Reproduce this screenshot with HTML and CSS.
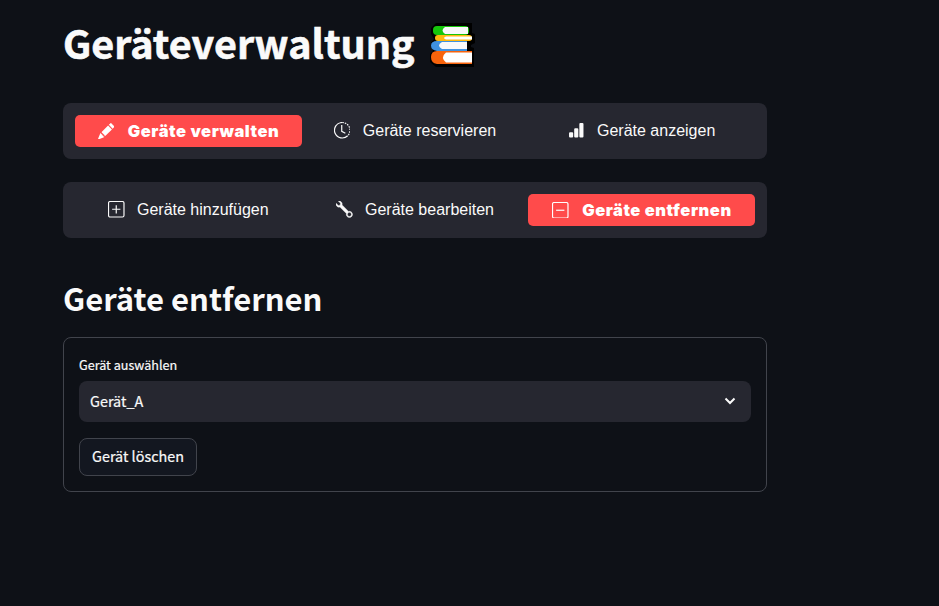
FILE: index.html
```html
<!DOCTYPE html>
<html lang="de">
<head>
<meta charset="utf-8">
<title>Geräteverwaltung</title>
<link rel="stylesheet" href="styles.css">
</head>
<body>
<main>
  <h1><span class="title-text">Geräteverwaltung</span>
    <svg class="books" viewBox="0 0 46 44">
      <path d="M7 0H43V10L46 11V20L42 22V24L45 25V44H7L1 39V31L4 28L2 24V20L5 16L2 11V5Z" fill="#000"/>
      <rect x="4" y="3" width="36" height="9" rx="4" fill="#16c60c"/>
      <path d="M16 4H39V11H16Q11 7.500 16 4" fill="#f8f8fa"/>
      <rect x="6" y="12" width="37" height="6" rx="3" fill="#ffb90f"/>
      <path d="M17 13.500H43V16.500H17Q13 15 17 13.500" fill="#fff"/>
      <path d="M38 18H8Q2 18 2 22.500T8 28H38" fill="#3f91e0"/>
      <path d="M13 19H38V26H13Q7 22.500 13 19" fill="#f8f8fa"/>
      <path d="M43 28H8Q2 28 2 34T8 41H43" fill="#f7630c"/>
      <path d="M17 29.500H43V39.500H17Q11 34.500 17 29.500" fill="#fff"/>
    </svg>
  </h1>
  <nav>
    <a class="active">
      <svg viewBox="0 0 16 16"><path d="M12.854.146a.5.5 0 0 0-.707 0L10.500 1.793 14.207 5.500l1.647-1.646a.5.5 0 0 0 0-.708zm.646 6.061L9.793 2.500 3.293 9H3.500a.5.5 0 0 1 .5.5v.5h.5a.5.5 0 0 1 .5.5v.5h.5a.5.5 0 0 1 .5.5v.5h.5a.5.5 0 0 1 .5.5v.207zm-7.468 7.468A.5.5 0 0 1 6 13.500V13h-.5a.5.5 0 0 1-.5-.5V12h-.5a.5.5 0 0 1-.5-.5V11h-.5a.5.5 0 0 1-.5-.5V10h-.5a.5.5 0 0 1-.175-.032l-.179.178-2 5a.5.5 0 0 0 .65.65l5-2z"/></svg>
      <span>Geräte verwalten</span></a>
    <a>
      <svg viewBox="0 0 16 16" class="line"><path d="M8 .5a7.500 7.500 0 1 0 5.300 12.800"/><path d="M8 .5a7.500 7.500 0 0 1 5.300 12.800" stroke-dasharray="1.500 1"/><path d="M7.500 3v6l3.500 2"/></svg>
      <span>Geräte reservieren</span></a>
    <a>
      <svg viewBox="0 0 16 16"><path d="M1 11a1 1 0 0 1 1-1h2a1 1 0 0 1 1 1v3a1 1 0 0 1-1 1H2a1 1 0 0 1-1-1zm5-4a1 1 0 0 1 1-1h2a1 1 0 0 1 1 1v7a1 1 0 0 1-1 1H7a1 1 0 0 1-1-1zm5-5a1 1 0 0 1 1-1h2a1 1 0 0 1 1 1v12a1 1 0 0 1-1 1h-2a1 1 0 0 1-1-1z"/></svg>
      <span>Geräte anzeigen</span></a>
  </nav>
  <nav>
    <a>
      <svg viewBox="0 0 16 16" class="line"><rect x=".5" y=".5" width="15" height="15" rx="1.500"/><path d="M8 4v8M4 8h8"/></svg>
      <span>Geräte hinzufügen</span></a>
    <a>
      <svg viewBox="0 0 16 16" class="wrench"><path d="M.102 2.223A3.004 3.004 0 0 0 3.780 5.897l6.341 6.252A3.003 3.003 0 0 0 13 16a3 3 0 1 0-.851-5.878L5.897 3.781A3.004 3.004 0 0 0 2.223.100l2.141 2.142L4 4l-1.757.364zm13.370 9.019.528.026.287.445.445.287.026.529L15 13l-.242.471-.026.529-.445.287-.287.445-.529.026L13 15l-.471-.242-.529-.026-.287-.445-.445-.287-.026-.529L11 13l.242-.471.026-.529.445-.287.287-.445.529-.026L13 11z"/></svg>
      <span>Geräte bearbeiten</span></a>
    <a class="active">
      <svg viewBox="0 0 16 16" class="line"><rect x=".5" y=".5" width="15" height="15" rx="1.500"/><path d="M4 8h8"/></svg>
      <span>Geräte entfernen</span></a>
  </nav>
  <h2>Geräte entfernen</h2>
  <form>
    <label>Gerät auswählen</label>
    <div class="select"><span>Gerät_A</span>
      <svg viewBox="0 0 12 8"><path d="M1.500 1.500 6 6l4.500-4.500"/></svg>
    </div>
    <button type="button">Gerät löschen</button>
  </form>
</main>
</body>
</html>
```

FILE: styles.css
```css
* { box-sizing: border-box; }
body {
  margin: 0;
  height: 606px;
  overflow: hidden;
  background: #0e1117;
  color: #fafafa;
  font-family: "Noto Sans CJK SC", "Noto Sans", sans-serif;
}
main { width: 704px; margin-left: 63px; padding-top: 15px; }
h1 {
  display: flex;
  gap: 14px;
  align-items: flex-start;
  height: 60px;
  margin: 0 0 28px;
  font-size: 39.5px;
  font-weight: 700;
  line-height: 54px;
  white-space: nowrap;
  -webkit-text-stroke: 0.6px currentColor;
}
.books { width: 46px; height: 44px; margin-top: 8px; flex: none; }
nav {
  display: grid;
  grid-template-columns: repeat(3, 1fr);
  height: 56px;
  margin-bottom: 23px;
  padding: 12px;
  border-radius: 8px;
  background: #262730;
  font: 16px/32px "Liberation Sans", Arial, sans-serif;
}
nav a {
  display: flex;
  align-items: center;
  justify-content: center;
  gap: 12.5px;
  height: 32px;
  border-radius: 5px;
  white-space: nowrap;
}
nav svg { width: 16.5px; height: 16.5px; margin-bottom: 1px; flex: none; fill: currentColor; }
nav .line { fill: none; stroke: currentColor; stroke-width: 1.15; }
nav .wrench { stroke: currentColor; stroke-width: 0.4; }
nav .active {
  gap: 13.5px;
  background: #ff4b4b;
  color: #fff;
  font-family: Inter, "Liberation Sans", sans-serif;
  font-weight: 900;
  letter-spacing: 0.55px;
  font-size: 16.5px;
}
nav .active span { margin-right: -0.5px; }
nav .active svg { margin-bottom: 0; }
h2 {
  height: 44px;
  margin: 40px 0 15px;
  font-size: 31px;
  font-weight: 600;
  line-height: 40px;
}
form {
  height: 155px;
  padding: 15px;
  border: 1px solid #41444c;
  border-radius: 8px;
  -webkit-text-stroke: 0.2px currentColor;
}
label { display: block; height: 28px; font-size: 12.6px; line-height: 23px; }
.select {
  display: flex;
  align-items: center;
  justify-content: space-between;
  height: 41px;
  padding: 0 15px 2px 11px;
  border-radius: 8px;
  background: #262730;
  font-size: 14.4px;
}
.select svg { width: 12px; height: 8px; fill: none; stroke: #fafafa; stroke-width: 2; }
button {
  display: block;
  width: 118px;
  height: 38px;
  margin-top: 16px;
  padding: 0 0 3px;
  border: 1px solid #41444c;
  border-radius: 8px;
  background: #131720;
  color: #fafafa;
  font: 14.4px "Noto Sans CJK SC", sans-serif;
  -webkit-text-stroke: 0.2px currentColor;
}
```
